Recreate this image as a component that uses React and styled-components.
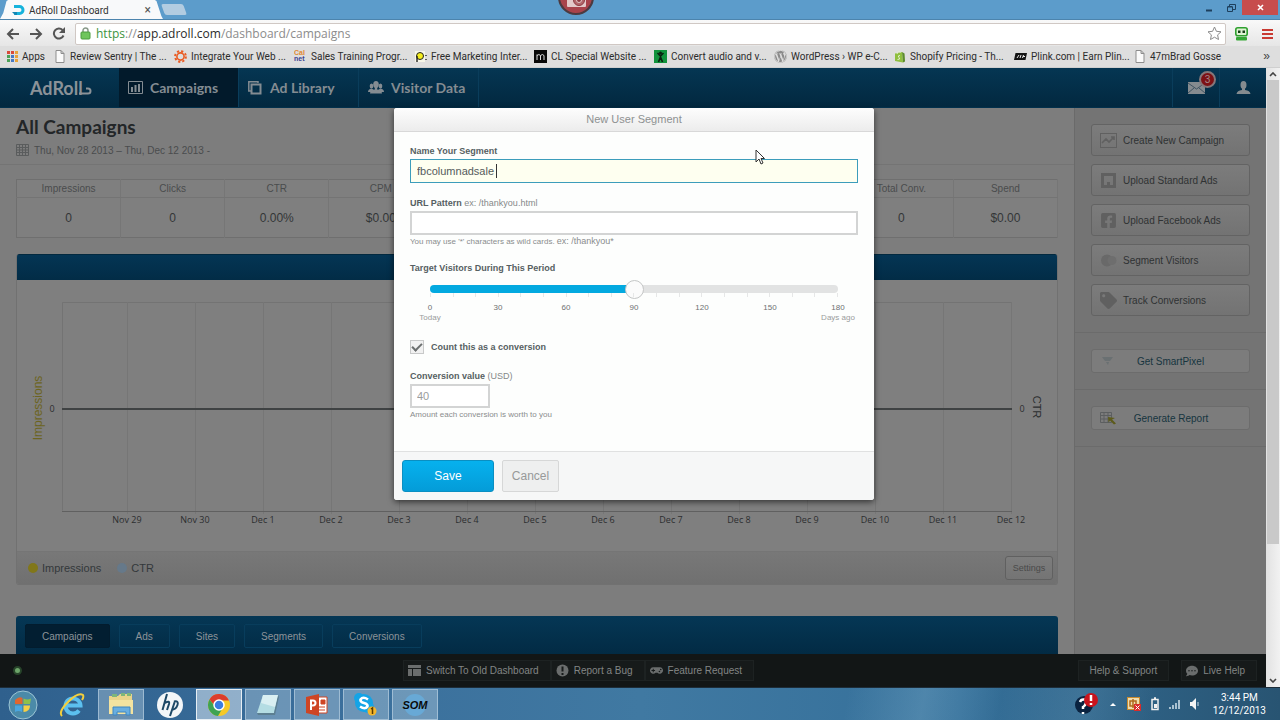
import { useState } from 'react';
import styled, { createGlobalStyle } from 'styled-components';
import { FaFacebookSquare, FaGamepad, FaCommentDots, FaWordpress, FaTag } from 'react-icons/fa';

const GlobalStyle = createGlobalStyle`
  * {
    box-sizing: border-box;
  }

  body {
    margin: 0;
    font-family: 'Liberation Sans', Arial, sans-serif;
    font-size: 12px;
    color: #3a3d3f;
  }

  button, input {
    font-family: inherit;
    margin: 0;
  }

  svg {
    display: block;
    flex: none;
  }
`;

const Screen = styled.div`
  display: flex;
  flex-direction: column;
  height: 100vh;
  overflow: hidden;
`;

// Browser chrome
const TabStrip = styled.div`
  display: flex;
  justify-content: space-between;
  height: 20px;
  background: #5c9ccb;
  border-bottom: 1px solid #4c84ad;
  font-family: Roboto, sans-serif;
`;

const TabGroup = styled.div`
  display: flex;
  align-items: flex-end;
`;

const BrowserTab = styled.div`
  display: flex;
  align-items: center;
  width: 163px;
  height: 20px;
  padding: 2px 12px 0;
  gap: 4px;
  background: #f8f9fa;
  clip-path: polygon(0 100%, 2% 70%, 4% 10%, 6% 0, 94% 0, 96% 10%, 99% 85%, 100% 100%);
  font-size: 10px;
  color: #333;

  span {
    flex: 1;
  }
`;

const TabClose = styled.button`
  border: 0;
  padding: 0;
  background: none;
  font-size: 12px;
  line-height: 12px;
  color: #555;
`;

const NewTab = styled.button`
  width: 22px;
  height: 11px;
  margin-bottom: 4px;
  border: 0;
  border-radius: 2px;
  background: #b2cce1;
  transform: skewX(20deg);
`;

const WindowControls = styled.div`
  display: flex;
  height: 15px;
  padding-right: 2px;
`;

const WindowButton = styled.button`
  display: flex;
  align-items: center;
  justify-content: center;
  width: ${props => (props.$close ? '36px' : '22px')};
  border: 0;
  padding: 0;
  color: ${props => (props.$close ? '#fff' : '#1d3f5c')};
  background: ${props => (props.$close ? '#c74d4d' : 'transparent')};
`;

const Recorder = styled.div`
  position: absolute;
  top: -21px;
  left: 50%;
  width: 36px;
  height: 36px;
  margin-left: -82px;
  border: 2px solid #4c3a40;
  border-radius: 50%;
  background: #a8434b;
`;

const Toolbar = styled.div`
  display: flex;
  align-items: center;
  height: 26px;
  padding: 1px 6px 0;
  gap: 9px;
  background: linear-gradient(#f9f9f9, #e6e6e6);
`;

const ToolButton = styled.button`
  display: flex;
  border: 0;
  padding: 0;
  background: none;
`;

const Omnibox = styled.div`
  display: flex;
  align-items: center;
  flex: 1;
  height: 22px;
  padding: 0 3px 0 4px;
  gap: 5px;
  background: #fff;
  border: 1px solid #d0c8c4;
  border-radius: 2px;
  font: 12px 'Open Sans', sans-serif;
  color: #8c8c8c;

  p {
    flex: 1;
    margin: 0;
  }

  em {
    font-style: normal;
    color: #3d9440;
  }

  strong {
    font-weight: 400;
    color: #2b2b2b;
  }
`;

const Bookmarks = styled.nav`
  display: flex;
  align-items: center;
  height: 22px;
  padding: 0 6px 1px;
  background: #dedede;
  border-bottom: 1px solid #cfcfcf;
`;

const Bookmark = styled.a`
  display: flex;
  align-items: center;
  flex: 0 1 ${props => (props.$short ? '48px' : '120px')};
  gap: 4px;
  font: 10px Roboto, sans-serif;
  color: #2c2c2c;
  text-decoration: none;
  white-space: nowrap;
`;

const MoreBookmarks = styled.button`
  margin-left: auto;
  border: 0;
  padding: 0 4px 0 0;
  background: none;
  font-size: 12px;
  line-height: 12px;
  color: #444;
`;

// Page
const Viewport = styled.div`
  display: flex;
  flex: 1;
  min-height: 0;
`;

const AppView = styled.div`
  position: relative;
  display: flex;
  flex-direction: column;
  flex: 1;
  min-width: 0;
  background: #7d7d7d;
`;

const Scrollbar = styled.div`
  display: flex;
  flex-direction: column;
  align-items: center;
  justify-content: space-between;
  width: 14px;
  padding: 4px 0;
  background: linear-gradient(90deg, #e2e2e2, #f2f2f2);
`;

const ScrollThumb = styled.div`
  width: 12px;
  flex: 0 0 76%;
  margin: 3px 0 auto;
  background: #c9c9c9;
`;

const NavBar = styled.header`
  display: flex;
  flex: none;
  height: 40px;
  background: linear-gradient(#053653, #02283f);
  border-bottom: 1px solid #02304c;
`;

const Logo = styled.a`
  display: flex;
  align-items: center;
  width: 119px;
  padding-left: 30px;
  font: 700 18px Lato, sans-serif;
  color: #8b9298;
  text-decoration: none;
`;

const NavItem = styled.a`
  display: flex;
  align-items: center;
  width: 120px;
  padding-left: 9px;
  gap: 7px;
  border-right: 1px solid #0a3d5b;
  background: ${props => (props.$active ? '#021a2b' : 'transparent')};
  font: 700 14px Lato, sans-serif;
  color: #848c92;
  text-decoration: none;
  white-space: nowrap;
`;

const NavIcons = styled.div`
  display: flex;
  margin-left: auto;
`;

const NavIcon = styled.button`
  position: relative;
  display: flex;
  align-items: center;
  justify-content: center;
  width: 47px;
  border: 0;
  border-left: 1px solid #0a3d5b;
  padding: 0;
  background: none;
  color: #858b8f;
`;

const Badge = styled.span`
  position: absolute;
  top: 3px;
  right: 3px;
  width: 17px;
  height: 17px;
  border: 2px solid #85777a;
  border-radius: 50%;
  background: #7d1115;
  font-size: 10px;
  line-height: 13px;
  color: #a3888a;
`;

const Content = styled.div`
  display: flex;
  flex: 1;
  min-height: 0;
  overflow: hidden;
`;

const Main = styled.main`
  flex: 1;
  min-width: 0;
`;

const PageHead = styled.div`
  height: 57px;
  padding: 8px 16px 0;
  border-bottom: 1px solid #747474;

  h1 {
    margin: 0;
    font: 700 19px/22px Lato, sans-serif;
    color: #232628;
  }
`;

const DateRange = styled.button`
  display: flex;
  align-items: center;
  height: 24px;
  gap: 5px;
  border: 0;
  padding: 0;
  background: none;
  font-size: 10px;
  color: #4a4c4d;
`;

const Sections = styled.div`
  display: flex;
  flex-direction: column;
  padding: 14px 16px 0;
`;

const Stats = styled.table`
  width: 100%;
  table-layout: fixed;
  border-collapse: collapse;
  border: 1px solid #6f6f6f;
  margin-bottom: 16px;
  background: #7f7f7f;

  th, td {
    padding: 0;
    border-right: 1px solid #767676;
    text-align: center;
  }

  th {
    height: 18px;
    border-bottom: 1px solid #747474;
    font-size: 10px;
    font-weight: 400;
    color: #4a4c4d;
  }

  td {
    height: 40px;
    color: #333637;
  }
`;

const Panel = styled.section`
  border: 1px solid #717171;
  border-top: 0;
  border-radius: 3px;
  margin-bottom: 31px;
  background: #7f7f7f;
  overflow: hidden;
`;

const PanelBar = styled.div`
  height: 26px;
  margin: 0 -1px;
  background: linear-gradient(#043554, #022c46);
  border-top: 1px solid #03293f;
`;

const Legend = styled.div`
  display: flex;
  align-items: center;
  height: 33px;
  padding: 0 4px 0 11px;
  gap: 16px;
  background: linear-gradient(#787878, #707070);
  border-top: 1px solid #757575;
`;

const LegendItem = styled.span`
  display: flex;
  align-items: center;
  gap: 4px;
  font-size: 11px;
  color: #33383b;

  &::before {
    content: '';
    width: 10px;
    height: 10px;
    border-radius: 50%;
    background: ${props => props.$color};
  }
`;

const SettingsButton = styled.button`
  width: 48px;
  height: 24px;
  margin-left: auto;
  border: 1px solid #606060;
  border-radius: 3px;
  padding: 0;
  background: linear-gradient(#7d7d7d, #747474);
  font-size: 9px;
  color: #4a4a4a;
`;

const TabBar = styled.div`
  display: flex;
  height: 60px;
  padding: 8px 9px;
  gap: 9px;
  border-radius: 3px 3px 0 0;
  background: linear-gradient(#053755, #022a43 40px);
`;

const TabButton = styled.button`
  height: 24px;
  padding: 0 16px;
  border: 1px solid ${props => (props.$active ? '#021c2e' : '#083d5c')};
  border-radius: 2px;
  background: ${props => (props.$active ? '#021e31' : 'transparent')};
  font-size: 10px;
  color: #8c9399;
`;

const Aside = styled.aside`
  width: 192px;
  background: #747474;
  border-left: 1px solid #6a6a6a;
`;

const ActionGroup = styled.div`
  display: flex;
  flex-direction: column;
  gap: 8px;
  padding: 16px;
  border-bottom: 1px solid #6b6b6b;
`;

const ActionButton = styled.button`
  display: flex;
  align-items: center;
  height: 32px;
  gap: 6px;
  padding: 0 8px;
  border: 1px solid #636363;
  border-radius: 3px;
  background: linear-gradient(#7c7c7c, #737373);
  font-size: 10px;
  color: #2f3233;
  white-space: nowrap;

  svg {
    color: #606060;
  }
`;

const LinkButton = styled(ActionButton)`
  height: 24px;
  border-color: #6c6c6c;
  background: #7c7c7c;
  color: #16353f;

  span {
    flex: 1;
    padding-right: 22px;
    text-align: center;
  }
`;

const StatusBar = styled.footer`
  display: flex;
  align-items: center;
  flex: none;
  height: 33px;
  padding: 0 9px 0 13px;
  background: #121616;
`;

const StatusSide = styled.div`
  display: flex;
  flex: ${props => (props.$end ? '1' : '0 1 390px')};
  gap: 12px;
  justify-content: ${props => (props.$end ? 'flex-end' : 'flex-start')};
`;

const StatusDot = styled.span`
  width: 9px;
  height: 9px;
  border: 2px solid #27442a;
  border-radius: 50%;
  background: #6da56a;
`;

const StatusGroup = styled.div`
  display: flex;
`;

const StatusButton = styled.button`
  display: flex;
  align-items: center;
  height: 21px;
  padding: 0 11px 0 ${props => (props.$plain ? '10px' : '4px')};
  gap: 5px;
  border: 1px solid #1d2222;
  background: #161a1a;
  font-size: 10px;
  color: #828585;
  white-space: nowrap;

  svg {
    color: #6a6d6d;
  }
`;

// Modal
const Overlay = styled.div`
  position: absolute;
  inset: 0;
  display: flex;
  align-items: flex-start;
  justify-content: center;
  padding: 40px 0 0 2px;
`;

const Modal = styled.form`
  width: 480px;
  background: #fdfefd;
  border-radius: 3px;
  box-shadow: 0 2px 6px rgba(0, 0, 0, 0.6);
  overflow: hidden;
`;

const ModalTitle = styled.h2`
  margin: 0;
  border-bottom: 1px solid #d8d8d8;
  background: linear-gradient(#fdfdfd, #ececec);
  font-size: 11px;
  font-weight: 400;
  line-height: 23px;
  text-align: center;
  color: #8e9191;
`;

const ModalBody = styled.div`
  display: flex;
  flex-direction: column;
  gap: 13px;
  padding: 12px 16px 30px;
`;

const Field = styled.div`
  position: relative;
  display: flex;
  flex-direction: column;
`;

const Label = styled.label`
  margin-bottom: 1px;
  font-size: 9px;
  font-weight: 700;
  line-height: 14px;
  color: #566062;

  span {
    font-weight: 400;
    color: #858989;
  }
`;

const TextInput = styled.input`
  width: ${props => (props.$small ? '80px' : '100%')};
  height: 24px;
  padding: 0 ${props => (props.$focused ? '6px' : '5px')};
  border: ${props => (props.$focused ? '1px solid #3c9dbb' : '2px solid #d3d4d4')};
  background: ${props => (props.$focused ? '#fefff0' : '#fff')};
  font-size: 11px;
  color: ${props => (props.$small ? '#9a9c9c' : '#555b5c')};
  caret-color: transparent;
  outline: none;
`;

const Caret = styled.span`
  position: absolute;
  top: 20px;
  left: 86px;
  width: 1px;
  height: 14px;
  background: #333;
`;

const Hint = styled.p`
  margin: 0;
  font-size: 8px;
  line-height: 13px;
  color: #8a8d8d;

  span {
    font-size: 9px;
  }
`;

const SliderBox = styled.div`
  padding: 4px 20px 0;
`;

const Slider = styled.input`
  display: block;
  width: 100%;
  height: 18px;
  appearance: none;
  background: none;

  &::-webkit-slider-runnable-track {
    height: 8px;
    border-radius: 4px;
    background: linear-gradient(90deg, #03a9e0 var(--fill), #e2e3e3 var(--fill));
  }

  &::-webkit-slider-thumb {
    appearance: none;
    width: 19px;
    height: 19px;
    margin-top: -5px;
    border: 1px solid #c4c6c6;
    border-radius: 50%;
    background: #fbfbfb;
  }
`;

const Ticks = styled.div`
  display: flex;
  justify-content: space-between;
  height: 4px;
  margin: -5px 0 6px;

  i {
    width: 1px;
    background: #e6e7e7;
  }
`;

const Scale = styled.div`
  display: flex;
  justify-content: space-between;
  height: 20px;
  font-size: 8px;
  line-height: 10px;
  color: #6d7171;
  text-align: center;
  white-space: nowrap;

  div {
    display: flex;
    flex-direction: column;
    align-items: center;
    width: 0;
  }

  small {
    font-size: 8px;
    color: #9a9c9c;
  }
`;

const CheckRow = styled.div`
  display: flex;
  align-items: center;
  gap: 7px;
  height: 14px;
  margin: 4px 0 2px;
`;

const Checkbox = styled.input`
  display: grid;
  place-items: center;
  width: 14px;
  height: 14px;
  appearance: none;
  border: 1px solid #c8c9c9;
  background: #f1f1f1;

  &:checked::before {
    content: '';
    width: 8px;
    height: 4px;
    margin-bottom: 2px;
    border-left: 2px solid #6b6f6f;
    border-bottom: 2px solid #6b6f6f;
    transform: rotate(-45deg);
  }
`;

const ModalFooter = styled.div`
  display: flex;
  gap: 8px;
  padding: 8px;
  border-top: 1px solid #e0e1e1;
  background: #f6f7f7;
`;

const SaveButton = styled.button`
  width: 92px;
  height: 32px;
  border: 1px solid #0a8fc2;
  border-radius: 3px;
  background: linear-gradient(#06b1ee, #049cd8);
  font-size: 12px;
  color: #fff;
`;

const CancelButton = styled.button`
  width: 57px;
  height: 32px;
  border: 1px solid #d6d7d7;
  border-radius: 2px;
  padding: 0;
  background: #eeefef;
  font-size: 12px;
  color: #979999;
`;

const Pointer = styled.svg`
  position: absolute;
  top: 149px;
  left: 59%;
`;

// Desktop taskbar
const Taskbar = styled.div`
  display: flex;
  align-items: stretch;
  flex: none;
  height: 33px;
  border-top: 1px solid #1d2c38;
  background:
    linear-gradient(100deg, transparent 66%, rgba(150, 195, 220, 0.25) 72%, transparent 78%, rgba(120, 170, 200, 0.2) 84%, transparent 90%),
    linear-gradient(90deg, #2f608d, #3a6e9b 25%, #4079a2 50%, #35709a 75%, #285472);
`;

const TaskButton = styled.button`
  display: flex;
  align-items: center;
  justify-content: center;
  width: 46px;
  margin: 1px 3px 0 0;
  border: 1px solid ${props => (props.$active ? '#e6eef4' : props.$open ? 'rgba(200, 220, 235, 0.55)' : 'transparent')};
  padding: 0;
  background: ${props => (props.$active ? 'rgba(205, 222, 236, 0.6)' : props.$open ? 'rgba(190, 212, 230, 0.38)' : 'transparent')};
`;

const Tray = styled.div`
  display: flex;
  align-items: center;
  gap: 9px;
  margin-left: auto;
  padding-right: 14px;
`;

const TrayIcons = styled.div`
  display: flex;
  align-items: center;
  gap: 9px;
  padding-right: 4px;
`;

const Clock = styled.div`
  font: 10px/13px Roboto, sans-serif;
  text-align: center;
  color: #fff;
`;

const statColumns = [
  ['Impressions', '0'],
  ['Clicks', '0'],
  ['CTR', '0.00%'],
  ['CPM', '$0.00'],
  ['', ''],
  ['', ''],
  ['', ''],
  ['', ''],
  ['Total Conv.', '0'],
  ['Spend', '$0.00'],
];

const chartDays = [
  'Nov 29', 'Nov 30', 'Dec 1', 'Dec 2', 'Dec 3', 'Dec 4', 'Dec 5',
  'Dec 6', 'Dec 7', 'Dec 8', 'Dec 9', 'Dec 10', 'Dec 11', 'Dec 12',
];

const PageIcon = () => (
  <svg width="12" height="13" viewBox="0 0 12 13" fill="#fafafa" stroke="#8d8d8d">
    <path d="M2 .5h5l3 3v9H2zM7 .5v3h3" />
  </svg>
);

const AppsIcon = () => (
  <svg width="12" height="12" viewBox="0 0 12 12">
    {['#d8493a', '#d8493a', '#e8a33a', '#4aa156', '#4779c4', '#e8a33a', '#4aa156', '#4779c4', '#e8a33a'].map((color, i) => (
      <rect key={i} x={(i % 3) * 4 + 1} y={Math.floor(i / 3) * 4 + 1} width="3" height="3" fill={color} />
    ))}
  </svg>
);

const GearIcon = () => (
  <svg width="13" height="13" viewBox="0 0 13 13" fill="none" stroke="#ea5b23">
    <circle cx="6.5" cy="6.5" r="3.6" strokeWidth="1.6" />
    <circle cx="6.5" cy="6.5" r="5.4" strokeWidth="2" strokeDasharray="2.2 2.04" />
  </svg>
);

const CalnetIcon = () => (
  <svg width="13" height="16" viewBox="0 0 13 16" fontFamily="Liberation Sans" fontWeight="700" fontSize="7">
    <text x="0" y="7" fill="#e08a33">Cal</text>
    <text x="0" y="13" fill="#3b3f8f">net</text>
  </svg>
);

const PIcon = () => (
  <svg width="13" height="13" viewBox="0 0 13 13">
    <rect x="1" y="1" width="10" height="11" fill="#f6f6e8" />
    <circle cx="6" cy="6" r="3.5" fill="#f5ee1b" stroke="#222" />
    <path d="M3 6v6M12 5v1M12 9v1" stroke="#222" strokeWidth="1.4" />
  </svg>
);

const MIcon = () => (
  <svg width="13" height="13" viewBox="0 0 13 13">
    <rect width="13" height="13" fill="#080808" />
    <path d="M3 10V4.5M3 5.5q2-2 3.5 0V10M6.5 5.5q2-2 3.5 0V10" fill="none" stroke="#ddd" />
  </svg>
);

const ConvertIcon = () => (
  <svg width="13" height="13" viewBox="0 0 13 13">
    <rect width="13" height="13" fill="#12933d" />
    <circle cx="6.5" cy="3" r="1.5" fill="#0a2110" />
    <path d="M3.5 3l3 3 3-3M6.5 5v3M6.5 7l-2 5M6.5 7l2 5" fill="none" stroke="#0a2110" strokeWidth="1.6" />
  </svg>
);

const ShopifyIcon = () => (
  <svg width="12" height="13" viewBox="0 0 12 13">
    <path d="M1 3.5l7-1.5 1 10.5-8-1.5z" fill="#8fbf3f" />
    <path d="M8 2l2.5 1.5.5 8-2 1z" fill="#5d8c2c" />
    <path d="M3 4q1-4 3.5-1.5M6 5.5q-3 0-1 2t-1.5 2" fill="none" stroke="#e5f1cd" />
  </svg>
);

const PlinkIcon = () => (
  <svg width="13" height="9" viewBox="0 0 13 9">
    <path d="M1.5 1H13l-1.5 7H0z" fill="#151515" />
    <path d="M3 6l2-3M6 6l1-3M8.5 6l1-3M9 4.5h2" stroke="#e9e9e9" />
  </svg>
);

const bookmarks = [
  { label: 'Apps', icon: <AppsIcon />, short: true },
  { label: 'Review Sentry | The ...', icon: <PageIcon /> },
  { label: 'Integrate Your Web ...', icon: <GearIcon /> },
  { label: 'Sales Training Progr...', icon: <CalnetIcon /> },
  { label: 'Free Marketing Inter...', icon: <PIcon /> },
  { label: 'CL Special Website ...', icon: <MIcon /> },
  { label: 'Convert audio and v...', icon: <ConvertIcon /> },
  { label: 'WordPress › WP e-C...', icon: <FaWordpress size={13} color="#8a8a8a" /> },
  { label: 'Shopify Pricing - Th...', icon: <ShopifyIcon /> },
  { label: 'Plink.com | Earn Plin...', icon: <PlinkIcon /> },
  { label: '47mBrad Gosse', icon: <PageIcon /> },
];

const Browser = () => (
  <>
    <TabStrip>
      <TabGroup>
        <BrowserTab>
          <svg width="13" height="12" viewBox="0 0 13 12">
            <path d="M2 2.5h5.500a3.500 3.500 0 0 1 0 7H2" fill="none" stroke="#16b3dc" strokeWidth="3" />
            <path d="M0 8h5v3H3z" fill="#1487b4" />
          </svg>
          <span>AdRoll Dashboard</span>
          <TabClose aria-label="Close tab">×</TabClose>
        </BrowserTab>
        <NewTab aria-label="New tab" />
      </TabGroup>
      <WindowControls>
        <WindowButton aria-label="Minimize">
          <svg width="7" height="8" viewBox="0 0 7 8"><path d="M0 6.500h6" stroke="currentColor" strokeWidth="2" /></svg>
        </WindowButton>
        <WindowButton aria-label="Restore">
          <svg width="9" height="8" viewBox="0 0 9 8" fill="none" stroke="currentColor"><path d="M.5 3h5v4.500h-5zM.5 2.500h5M2.500 2V.5h6v5H6" /></svg>
        </WindowButton>
        <WindowButton $close aria-label="Close window">
          <svg width="7" height="7" viewBox="0 0 7 7"><path d="M1 1l5 5M6 1L1 6" stroke="currentColor" strokeWidth="1.6" /></svg>
        </WindowButton>
      </WindowControls>
    </TabStrip>
    <Toolbar>
      <ToolButton aria-label="Back">
        <svg width="14" height="12" viewBox="0 0 14 12" fill="none" stroke="#555" strokeWidth="2"><path d="M7 1L2 6l5 5M2 6h11" /></svg>
      </ToolButton>
      <ToolButton aria-label="Forward">
        <svg width="14" height="12" viewBox="0 0 14 12" fill="none" stroke="#555" strokeWidth="2"><path d="M7 1l5 5-5 5M12 6H1" /></svg>
      </ToolButton>
      <ToolButton aria-label="Reload">
        <svg width="14" height="13" viewBox="0 0 14 13">
          <path d="M11.500 8.500a5 5 0 1 1-1-5.500" fill="none" stroke="#555" strokeWidth="2" />
          <path d="M13 0v6H7z" fill="#555" />
        </svg>
      </ToolButton>
      <Omnibox>
        <svg width="11" height="13" viewBox="0 0 11 13">
          <path d="M3 6V3.500a2.500 2.500 0 0 1 5 0V6" fill="none" stroke="#8a9a8a" strokeWidth="1.5" />
          <rect x="1" y="5" width="9" height="7" rx="1" fill="#6fc55c" stroke="#4b9c3d" />
        </svg>
        <p><em>https</em>://<strong>app.adroll.com</strong>/dashboard/campaigns</p>
        <svg width="15" height="15" viewBox="0 0 15 15">
          <path d="M7.500 1l1.900 4.300 4.600.5-3.400 3.100.9 4.600-4-2.300-4 2.300.9-4.600L1 5.800l4.600-.5z" fill="#fff" stroke="#8b8b8b" />
        </svg>
      </Omnibox>
      <ToolButton aria-label="RoboForm">
        <svg width="13" height="14" viewBox="0 0 13 14">
          <rect x=".8" y=".8" width="11.4" height="8" rx="2" fill="#dff3d4" stroke="#2fa02f" strokeWidth="1.6" />
          <path d="M3 3.500h2.500v2.500H3zM7.500 3.500H10v2.500H7.500z" fill="#173d17" />
          <rect x="1" y="10" width="11" height="3.5" rx="1" fill="#35a835" />
        </svg>
      </ToolButton>
      <ToolButton aria-label="Menu">
        <svg width="17" height="12" viewBox="0 0 17 12"><path d="M5 2h11M5 6h11M5 10h11" stroke="#c93a32" strokeWidth="2" /></svg>
      </ToolButton>
    </Toolbar>
    <Bookmarks>
      {bookmarks.map(item => (
        <Bookmark key={item.label} href="#" $short={item.short}>
          {item.icon}
          {item.label}
        </Bookmark>
      ))}
      <MoreBookmarks aria-label="More bookmarks">»</MoreBookmarks>
    </Bookmarks>
    <Recorder>
      <svg width="32" height="32" viewBox="0 0 32 32">
        <rect x="7" y="12" width="19" height="14" rx="1" fill="#e3c9c9" />
        <circle cx="19" cy="19" r="5.5" fill="#b3676b" stroke="#8d3a40" />
        <circle cx="19" cy="19" r="2.5" fill="#8d3a40" stroke="#e3c9c9" />
      </svg>
    </Recorder>
  </>
);

const Navigation = () => (
  <NavBar>
    <Logo href="#">
      AdRoll
      <svg width="9" height="18" viewBox="0 0 9 18" fill="none" stroke="currentColor" strokeWidth="2" overflow="visible">
        <path d="M-4 14.500h9a2.500 2.500 0 0 0 0-5H3" />
      </svg>
    </Logo>
    <NavItem href="#" $active>
      <svg width="15" height="13" viewBox="0 0 15 13" fill="none" stroke="currentColor">
        <path d="M.5.5h14v12H.5z" />
        <path d="M4 11V6M7.500 11V4M11 11V3" strokeWidth="2" />
      </svg>
      Campaigns
    </NavItem>
    <NavItem href="#">
      <svg width="15" height="14" viewBox="0 0 15 14" fill="none" stroke="currentColor">
        <path d="M10 2V.8H.8V10H3" strokeWidth="1.5" />
        <path d="M3.500 3.500h9v9h-9z" strokeWidth="2" />
      </svg>
      Ad Library
    </NavItem>
    <NavItem href="#">
      <svg width="16" height="13" viewBox="0 0 16 13" fill="currentColor">
        <ellipse cx="3.5" cy="5" rx="1.8" ry="2.5" />
        <ellipse cx="12.5" cy="5" rx="1.8" ry="2.5" />
        <path d="M0 11q0-3 3.500-3.500l2 1V11zM16 11q0-3-3.500-3.500l-2 1V11z" />
        <ellipse cx="8" cy="3.5" rx="2.8" ry="3.5" />
        <path d="M2 12.500q0-3.500 4.800-4V6h2.400v2.500q4.800.5 4.800 4z" />
      </svg>
      Visitor Data
    </NavItem>
    <NavIcons>
      <NavIcon aria-label="Messages">
        <svg width="17" height="12" viewBox="0 0 17 12">
          <rect width="17" height="12" fill="currentColor" />
          <path d="M0 1l8.500 6L17 1M0 11l6-5M17 11l-6-5" fill="none" stroke="#3f5361" />
        </svg>
        <Badge>3</Badge>
      </NavIcon>
      <NavIcon aria-label="Account">
        <svg width="15" height="13" viewBox="0 0 15 13" fill="currentColor">
          <ellipse cx="7.5" cy="4" rx="3" ry="4" />
          <path d="M6 6h3v3q5 .5 5.500 4H.5q.5-3.500 5.500-4z" />
        </svg>
      </NavIcon>
    </NavIcons>
  </NavBar>
);

const Chart = () => (
  <svg width="100%" viewBox="0 0 1040 271" fontFamily="Open Sans" fontSize="9" fill="#2c2e2f" textAnchor="middle">
    <path d="M45.500 22.500h949M45.500 22.500v208" stroke="#737373" fill="none" />
    {chartDays.map((day, i) => (
      <g key={day}>
        <path d={`M${110.5 + i * 68} 22v212`} stroke="#767676" />
        <text x={110 + i * 68} y="243">{day}</text>
      </g>
    ))}
    <path d="M45 231.500h950" stroke="#606060" />
    <path d="M45 129h950" stroke="#3f4243" strokeWidth="2" />
    <text x="35" y="132">0</text>
    <text x="1005" y="132">0</text>
    <text transform="translate(25 128) rotate(-90)" fontFamily="Liberation Sans" fontSize="12" fill="#6c6420">Impressions</text>
    <text transform="translate(1016 127) rotate(90)" fontFamily="Liberation Sans" fontSize="11">CTR</text>
  </svg>
);

const Sidebar = () => (
  <Aside>
    <ActionGroup>
      <ActionButton>
        <svg width="17" height="15" viewBox="0 0 17 15" fill="none" stroke="currentColor">
          <rect x=".5" y=".5" width="16" height="14" />
          <path d="M2 10l4-4 3 3 5-5M11 4h3v3" strokeWidth="1.6" />
        </svg>
        Create New Campaign
      </ActionButton>
      <ActionButton>
        <svg width="17" height="15" viewBox="0 0 17 15">
          <path d="M1 0h15v15H1zM4 3v9h3V9h3v3h3V3z" fill="currentColor" fillRule="evenodd" />
        </svg>
        Upload Standard Ads
      </ActionButton>
      <ActionButton><FaFacebookSquare size={17} />Upload Facebook Ads</ActionButton>
      <ActionButton>
        <svg width="17" height="15" viewBox="0 0 17 15" fill="#696969">
          <circle cx="7" cy="7.5" r="6" />
          <circle cx="12" cy="7.5" r="4.5" fill="#6e6e6e" />
        </svg>
        Segment Visitors
      </ActionButton>
      <ActionButton><FaTag size={17} />Track Conversions</ActionButton>
    </ActionGroup>
    <ActionGroup>
      <LinkButton>
        <svg width="16" height="12" viewBox="0 0 16 12"><path d="M2 2h11l-3 4H5zM6 7h3l-1 3z" fill="#6a7072" /></svg>
        <span>Get SmartPixel</span>
      </LinkButton>
    </ActionGroup>
    <ActionGroup>
      <LinkButton>
        <svg width="17" height="14" viewBox="0 0 17 14">
          <path d="M.5 1.500h11v10H.5zM.5 4.500h11M.5 8h11M4 1.500v10M8 1.500v10" fill="none" stroke="#5c5f60" />
          <path d="M8 6l7 1-3 1.500 4 4-2 1-4-4-1.500 2z" fill="#5d5b1a" />
        </svg>
        <span>Generate Report</span>
      </LinkButton>
    </ActionGroup>
  </Aside>
);

const SegmentModal = () => {
  const [name, setName] = useState('fbcolumnadsale');
  const [pattern, setPattern] = useState('');
  const [days, setDays] = useState(90);
  const [isConversion, setIsConversion] = useState(true);
  const [value, setValue] = useState('40');

  return (
    <Overlay>
      <Modal onSubmit={(event) => event.preventDefault()}>
        <ModalTitle>New User Segment</ModalTitle>
        <ModalBody>
          <Field>
            <Label htmlFor="segment-name">Name Your Segment</Label>
            <TextInput id="segment-name" $focused value={name} onChange={(e) => setName(e.target.value)} />
            <Caret />
          </Field>
          <Field>
            <Label htmlFor="url-pattern">URL Pattern <span>ex: /thankyou.html</span></Label>
            <TextInput id="url-pattern" value={pattern} onChange={(e) => setPattern(e.target.value)} />
            <Hint>You may use '*' characters as wild cards. <span>ex: /thankyou*</span></Hint>
          </Field>
          <Field>
            <Label htmlFor="period">Target Visitors During This Period</Label>
            <SliderBox>
              <Slider
                id="period"
                type="range"
                min="0"
                max="180"
                value={days}
                onChange={(e) => setDays(Number(e.target.value))}
                style={{ '--fill': `${(days / 180) * 100}%` }}
              />
              <Ticks>
                {Array.from({ length: 19 }, (_, i) => <i key={i} />)}
              </Ticks>
              <Scale>
                {[0, 30, 60, 90, 120, 150, 180].map(mark => (
                  <div key={mark}>
                    {mark}
                    {mark === 0 && <small>Today</small>}
                    {mark === 180 && <small>Days ago</small>}
                  </div>
                ))}
              </Scale>
            </SliderBox>
          </Field>
          <CheckRow>
            <Checkbox
              id="conversion"
              type="checkbox"
              checked={isConversion}
              onChange={(e) => setIsConversion(e.target.checked)}
            />
            <Label htmlFor="conversion">Count this as a conversion</Label>
          </CheckRow>
          <Field>
            <Label htmlFor="conversion-value">Conversion value <span>(USD)</span></Label>
            <TextInput id="conversion-value" $small value={value} onChange={(e) => setValue(e.target.value)} />
            <Hint>Amount each conversion is worth to you</Hint>
          </Field>
        </ModalBody>
        <ModalFooter>
          <SaveButton type="submit">Save</SaveButton>
          <CancelButton type="button">Cancel</CancelButton>
        </ModalFooter>
      </Modal>
    </Overlay>
  );
};

const DesktopTaskbar = () => (
  <Taskbar>
    <TaskButton aria-label="Start">
      <svg width="30" height="30" viewBox="0 0 30 30">
        <circle cx="15" cy="15" r="14" fill="#4b8aa8" stroke="#9cc4d4" />
        <path d="M7 10q4-4 7.500-2v6H7z" fill="#e0662f" />
        <path d="M15.500 8.500q4 2 7.500 0l-1 5.500h-6.500z" fill="#8fc04a" />
        <path d="M7 15.500h7V22q-3.500-2-7 0z" fill="#4aa6df" />
        <path d="M15.500 15.500H22q0 6.500-6.500 6.500z" fill="#f5cf45" />
      </svg>
    </TaskButton>
    <TaskButton aria-label="Internet Explorer">
      <svg width="26" height="28" viewBox="0 0 26 28" fill="none">
        <path d="M20 19.500a7.500 7.500 0 1 1 1.500-5H8" stroke="#5cc0ef" strokeWidth="4" />
        <path d="M3 25Q-1 21 9 11T24 4q1 2-1 5" stroke="#f3cf3c" strokeWidth="2" />
      </svg>
    </TaskButton>
    <TaskButton $open aria-label="File Explorer">
      <svg width="26" height="25" viewBox="0 0 26 25">
        <path d="M1 4h9l2-2h12v20H1z" fill="#e9d48a" />
        <path d="M4 2h5v3H4zM13 1h4v3h-4zM19 1h4v3h-4z" fill="#7db67a" />
        <path d="M1 8h24v14H1z" fill="#f3e3a0" />
        <path d="M5 15h17v8h-4v-3H9v3H5z" fill="#69aee0" stroke="#3d86c2" />
      </svg>
    </TaskButton>
    <TaskButton aria-label="HP">
      <svg width="28" height="28" viewBox="0 0 28 28">
        <circle cx="14" cy="14" r="13" fill="#f3f6f8" />
        <path d="M11 3L6.500 19M9 12q5-3 4 1l-2 6M19 10l-5 15M18 10.500q5-1 3.500 3.500t-6 5" fill="none" stroke="#1d4866" strokeWidth="2" />
      </svg>
    </TaskButton>
    <TaskButton $active aria-label="Chrome">
      <svg width="24" height="24" viewBox="0 0 24 24">
        <circle cx="12" cy="12" r="11" fill="#f6c927" />
        <path d="M2.500 6.500A11 11 0 0 1 22 7.500H12l-4.500 5z" fill="#dc3c2c" />
        <path d="M2.500 6.500A11 11 0 0 0 11 23l5-8.500-8-1z" fill="#3ea352" />
        <circle cx="12" cy="12" r="5" fill="#3b7de0" stroke="#fff" strokeWidth="1.5" />
      </svg>
    </TaskButton>
    <TaskButton $open aria-label="Notepad">
      <svg width="24" height="24" viewBox="0 0 24 24">
        <path d="M7 2h15l-4 18H1z" fill="#b4dde3" />
        <path d="M22 2l1 2-4 18-1-2zM1 20h17l1 2H2z" fill="#5c7f91" />
        <path d="M7 2h15l-3 12L5 10z" fill="#d9eff2" />
      </svg>
    </TaskButton>
    <TaskButton $open aria-label="PowerPoint">
      <svg width="22" height="22" viewBox="0 0 22 22">
        <path d="M12 3h9v16h-9z" fill="#fff" stroke="#ce4524" />
        <path d="M15 6h4v4h-4zM13 13h6M13 16h6" fill="#ce4524" stroke="#ce4524" />
        <path d="M0 3l13-3v22L0 19z" fill="#ce4524" />
        <path d="M5 16V6.500h2a2.500 2.500 0 0 1 0 5H5" fill="none" stroke="#fff" strokeWidth="2" />
      </svg>
    </TaskButton>
    <TaskButton $open aria-label="Skype">
      <svg width="24" height="24" viewBox="0 0 24 24">
        <circle cx="10" cy="10" r="9" fill="#14a4e6" />
        <circle cx="5" cy="5" r="5" fill="#14a4e6" />
        <circle cx="14" cy="14" r="6" fill="#14a4e6" />
        <path d="M14 6.500Q9 3 6.500 6.500 6 9 10 10t3.500 3.500Q11 17 6 13.500" fill="none" stroke="#fff" strokeWidth="2.6" />
        <circle cx="18" cy="18" r="4.5" fill="#f4b72d" />
        <path d="M17 16l1.500-1v6" fill="none" stroke="#5b3c00" strokeWidth="1.5" />
      </svg>
    </TaskButton>
    <TaskButton $open aria-label="SOM">
      <svg width="28" height="26" viewBox="0 0 28 26">
        <circle cx="14" cy="13" r="11" fill="#68a9d6" />
        <text x="14" y="17" textAnchor="middle" fontFamily="Liberation Sans" fontSize="11" fontWeight="700" fontStyle="italic" fill="#0b0b0b">SOM</text>
      </svg>
    </TaskButton>
    <Tray>
      <svg width="24" height="24" viewBox="0 0 24 24">
        <circle cx="10" cy="13" r="9" fill="#0b2340" />
        <path d="M6 10q1-3 4-2.500t2 3.500-3 4v2M9 20v2" fill="none" stroke="#fff" strokeWidth="2.5" />
        <circle cx="17" cy="8" r="7" fill="#c9141d" />
        <path d="M17 3v6M17 11v2" stroke="#fff" strokeWidth="2.5" />
      </svg>
      <TrayIcons>
        <svg width="11" height="6" viewBox="0 0 11 6"><path d="M3 5l3-3 3 3z" fill="#fff" /></svg>
        <svg width="14" height="14" viewBox="0 0 14 14">
          <rect x=".5" y=".5" width="12" height="12" fill="#eeddb0" stroke="#c98b2f" />
          <path d="M3 4h6v5H3zM6 2v9" fill="none" stroke="#b06a1c" strokeWidth="1.5" />
          <rect x="7" y="7" width="7" height="7" fill="#d92b2b" />
          <path d="M8.500 8.500l4 4M12.500 8.500l-4 4" stroke="#fff" />
        </svg>
        <svg width="10" height="14" viewBox="0 0 10 14">
          <path d="M2 2.500h6v10H2zM4 1h2" fill="none" stroke="#f0f0f0" strokeWidth="1.5" />
          <path d="M4 7h3v4H4z" fill="#f0f0f0" />
        </svg>
        <svg width="12" height="10" viewBox="0 0 12 10"><path d="M1 10V8M4 10V6M7 10V4M10 10V1" stroke="#c9dbe6" strokeWidth="1.6" /></svg>
        <svg width="10" height="12" viewBox="0 0 10 12">
          <path d="M0 4h2l4-4v12L2 8H0z" fill="#f4f4f4" />
          <path d="M8 4v4" stroke="#c9dbe6" />
        </svg>
      </TrayIcons>
      <Clock>3:44 PM<br />12/12/2013</Clock>
    </Tray>
  </Taskbar>
);

const App = () => (
  <Screen>
    <GlobalStyle />
    <Browser />
    <Viewport>
      <AppView>
        <Navigation />
        <Content>
          <Main>
            <PageHead>
              <h1>All Campaigns</h1>
              <DateRange>
                <svg width="13" height="12" viewBox="0 0 13 12" fill="none" stroke="#5a5c5d">
                  <path d="M.5.5h12v11H.5zM.5 3.500h12M.5 6h12M.5 8.500h12M3.500.5v11M6.500.5v11M9.500.5v11" />
                </svg>
                Thu, Nov 28 2013 – Thu, Dec 12 2013 -
              </DateRange>
            </PageHead>
            <Sections>
              <Stats>
                <thead>
                  <tr>{statColumns.map(([label], i) => <th key={i}>{label}</th>)}</tr>
                </thead>
                <tbody>
                  <tr>{statColumns.map(([, value], i) => <td key={i}>{value}</td>)}</tr>
                </tbody>
              </Stats>
              <Panel>
                <PanelBar />
                <Chart />
                <Legend>
                  <LegendItem $color="#81771a">Impressions</LegendItem>
                  <LegendItem $color="#66798a">CTR</LegendItem>
                  <SettingsButton>Settings</SettingsButton>
                </Legend>
              </Panel>
              <TabBar>
                <TabButton $active>Campaigns</TabButton>
                <TabButton>Ads</TabButton>
                <TabButton>Sites</TabButton>
                <TabButton>Segments</TabButton>
                <TabButton>Conversions</TabButton>
              </TabBar>
            </Sections>
          </Main>
          <Sidebar />
        </Content>
        <StatusBar>
          <StatusSide><StatusDot /></StatusSide>
          <StatusGroup>
            <StatusButton>
              <svg width="13" height="11" viewBox="0 0 13 11" fill="currentColor"><path d="M0 0h13v3H0zM0 4h4v7H0zM5 4h8v7H5z" /></svg>
              Switch To Old Dashboard
            </StatusButton>
            <StatusButton>
              <svg width="13" height="13" viewBox="0 0 13 13">
                <circle cx="6.5" cy="6.5" r="6" fill="currentColor" />
                <path d="M6.500 2.500v5M6.500 9v2" stroke="#161a1a" strokeWidth="2" />
              </svg>
              Report a Bug
            </StatusButton>
            <StatusButton><FaGamepad size={13} />Feature Request</StatusButton>
          </StatusGroup>
          <StatusSide $end>
            <StatusButton $plain>Help &amp; Support</StatusButton>
            <StatusButton><FaCommentDots size={12} />Live Help</StatusButton>
          </StatusSide>
        </StatusBar>
        <SegmentModal />
      </AppView>
      <Scrollbar>
        <svg width="8" height="5" viewBox="0 0 8 5"><path d="M1 4l3-3 3 3" fill="none" stroke="#444" strokeWidth="1.6" /></svg>
        <ScrollThumb />
        <svg width="8" height="5" viewBox="0 0 8 5"><path d="M1 1l3 3 3-3" fill="none" stroke="#444" strokeWidth="1.6" /></svg>
      </Scrollbar>
    </Viewport>
    <DesktopTaskbar />
    <Pointer width="10" height="16" viewBox="0 0 10 16">
      <path d="M1 1v12l3-3 2 5 2-1-2-4.500h3.500z" fill="#fff" stroke="#333" />
    </Pointer>
  </Screen>
);

export default App;
